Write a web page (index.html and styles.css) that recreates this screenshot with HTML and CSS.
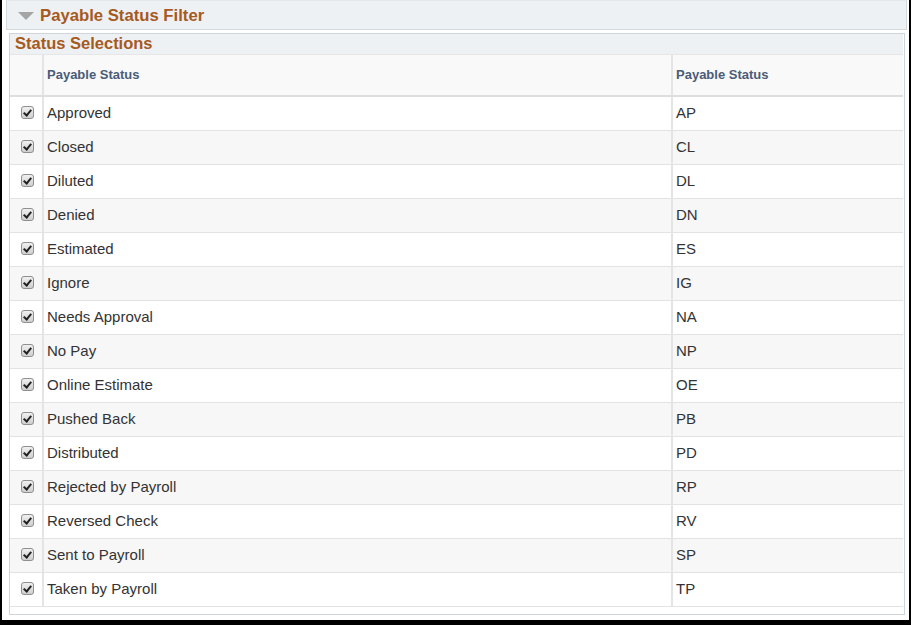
FILE: index.html
```html
<!DOCTYPE html>
<html>
<head>
<meta charset="utf-8">
<link rel="stylesheet" href="styles.css">
</head>
<body>
<div class="page">
  <div class="collapse-bar">
    <span class="tri"></span>
    <span class="collapse-title">Payable Status Filter</span>
  </div>
  <div class="groupbox">
    <div class="gb-title">Status Selections</div>
    <table class="grid">
      <colgroup><col class="c-chk"><col class="c-desc"><col class="c-code"></colgroup>
      <thead>
        <tr><th></th><th>Payable Status</th><th>Payable Status</th></tr>
      </thead>
      <tbody>
        <tr><td class="chk"><span class="cb"></span></td><td>Approved</td><td>AP</td></tr>
        <tr><td class="chk"><span class="cb"></span></td><td>Closed</td><td>CL</td></tr>
        <tr><td class="chk"><span class="cb"></span></td><td>Diluted</td><td>DL</td></tr>
        <tr><td class="chk"><span class="cb"></span></td><td>Denied</td><td>DN</td></tr>
        <tr><td class="chk"><span class="cb"></span></td><td>Estimated</td><td>ES</td></tr>
        <tr><td class="chk"><span class="cb"></span></td><td>Ignore</td><td>IG</td></tr>
        <tr><td class="chk"><span class="cb"></span></td><td>Needs Approval</td><td>NA</td></tr>
        <tr><td class="chk"><span class="cb"></span></td><td>No Pay</td><td>NP</td></tr>
        <tr><td class="chk"><span class="cb"></span></td><td>Online Estimate</td><td>OE</td></tr>
        <tr><td class="chk"><span class="cb"></span></td><td>Pushed Back</td><td>PB</td></tr>
        <tr><td class="chk"><span class="cb"></span></td><td>Distributed</td><td>PD</td></tr>
        <tr><td class="chk"><span class="cb"></span></td><td>Rejected by Payroll</td><td>RP</td></tr>
        <tr><td class="chk"><span class="cb"></span></td><td>Reversed Check</td><td>RV</td></tr>
        <tr><td class="chk"><span class="cb"></span></td><td>Sent to Payroll</td><td>SP</td></tr>
        <tr><td class="chk"><span class="cb"></span></td><td>Taken by Payroll</td><td>TP</td></tr>
      </tbody>
    </table>
  </div>
</div>
</body>
</html>
```
FILE: styles.css
```css
html, body {
  margin: 0;
  padding: 0;
  background: #000;
  height: 625px;
  overflow: hidden;
}
.page {
  background: #fff;
  margin: 0 2px 0 2px;
  height: 620px;
  box-sizing: border-box;
  padding: 0 0 0 4px;
  font-family: "Liberation Sans", Arial, sans-serif;
  display: flex;
  flex-direction: column;
}
.collapse-bar {
  height: 30px;
  box-sizing: border-box;
  width: 901px;
  background: #eef1f3;
  border: 1px solid #d3d9dd;
  border-top-color: #e4e8ea;
  display: flex;
  align-items: center;
  padding: 2px 0 0 11px;
  gap: 6px;
}
.tri {
  width: 0;
  height: 0;
  border-left: 8px solid transparent;
  border-right: 8px solid transparent;
  border-top: 8px solid #a4a4a4;
  margin-top: -1px;
}
.collapse-title {
  font-size: 16.7px;
  font-weight: bold;
  color: #a65a1e;
}
.groupbox {
  margin: 3px 0 0 3px;
  width: 896px;
  height: 582px;
  box-sizing: border-box;
  border: 1px solid #cfd5da;
  display: flex;
  flex-direction: column;
  padding-right: 1px;
}
.gb-title {
  height: 20px;
  background: #eef1f3;
  font-size: 16.5px;
  font-weight: bold;
  color: #a65a1e;
  padding-left: 5px;
  line-height: 19px;
}
.grid {
  border-collapse: collapse;
  width: 893px;
  table-layout: fixed;
}
.c-chk { width: 33px; }
.c-desc { width: 629px; }
.c-code { width: 231px; }
.grid th {
  height: 40px;
  background: #f9f9f9;
  border-top: 1px solid #e6e6e6;
  border-bottom: 2px solid #dedede;
  border-left: 2px solid #e4e4e4;
  text-align: left;
  font-size: 13px;
  font-weight: bold;
  color: #4a5c78;
  padding: 0 0 0 3px;
  line-height: 14px;
}
.grid th:first-child { border-left: none; }
.grid td {
  height: 34px;
  box-sizing: border-box;
  border-bottom: 1px solid #e3e3e3;
  border-left: 2px solid #e4e4e4;
  font-size: 15px;
  color: #333;
  padding: 0 0 2px 3px;
}
.grid td:first-child { border-left: none; }
.grid tbody tr:nth-child(even) td { background: #f7f7f7; }
.grid td.chk { padding: 0 0 1px 11px; }
.cb {
  display: block;
  width: 13px;
  height: 13px;
  box-sizing: border-box;
  border: 1px solid #8f8f8f;
  border-radius: 3px;
  background: linear-gradient(#f0f0f0, #cfcfcf);
  position: relative;
}
.cb::after {
  content: "";
  position: absolute;
  left: 3px;
  top: 1px;
  width: 3px;
  height: 6px;
  border-right: 2px solid #222;
  border-bottom: 2px solid #222;
  transform: rotate(40deg);
}
```
